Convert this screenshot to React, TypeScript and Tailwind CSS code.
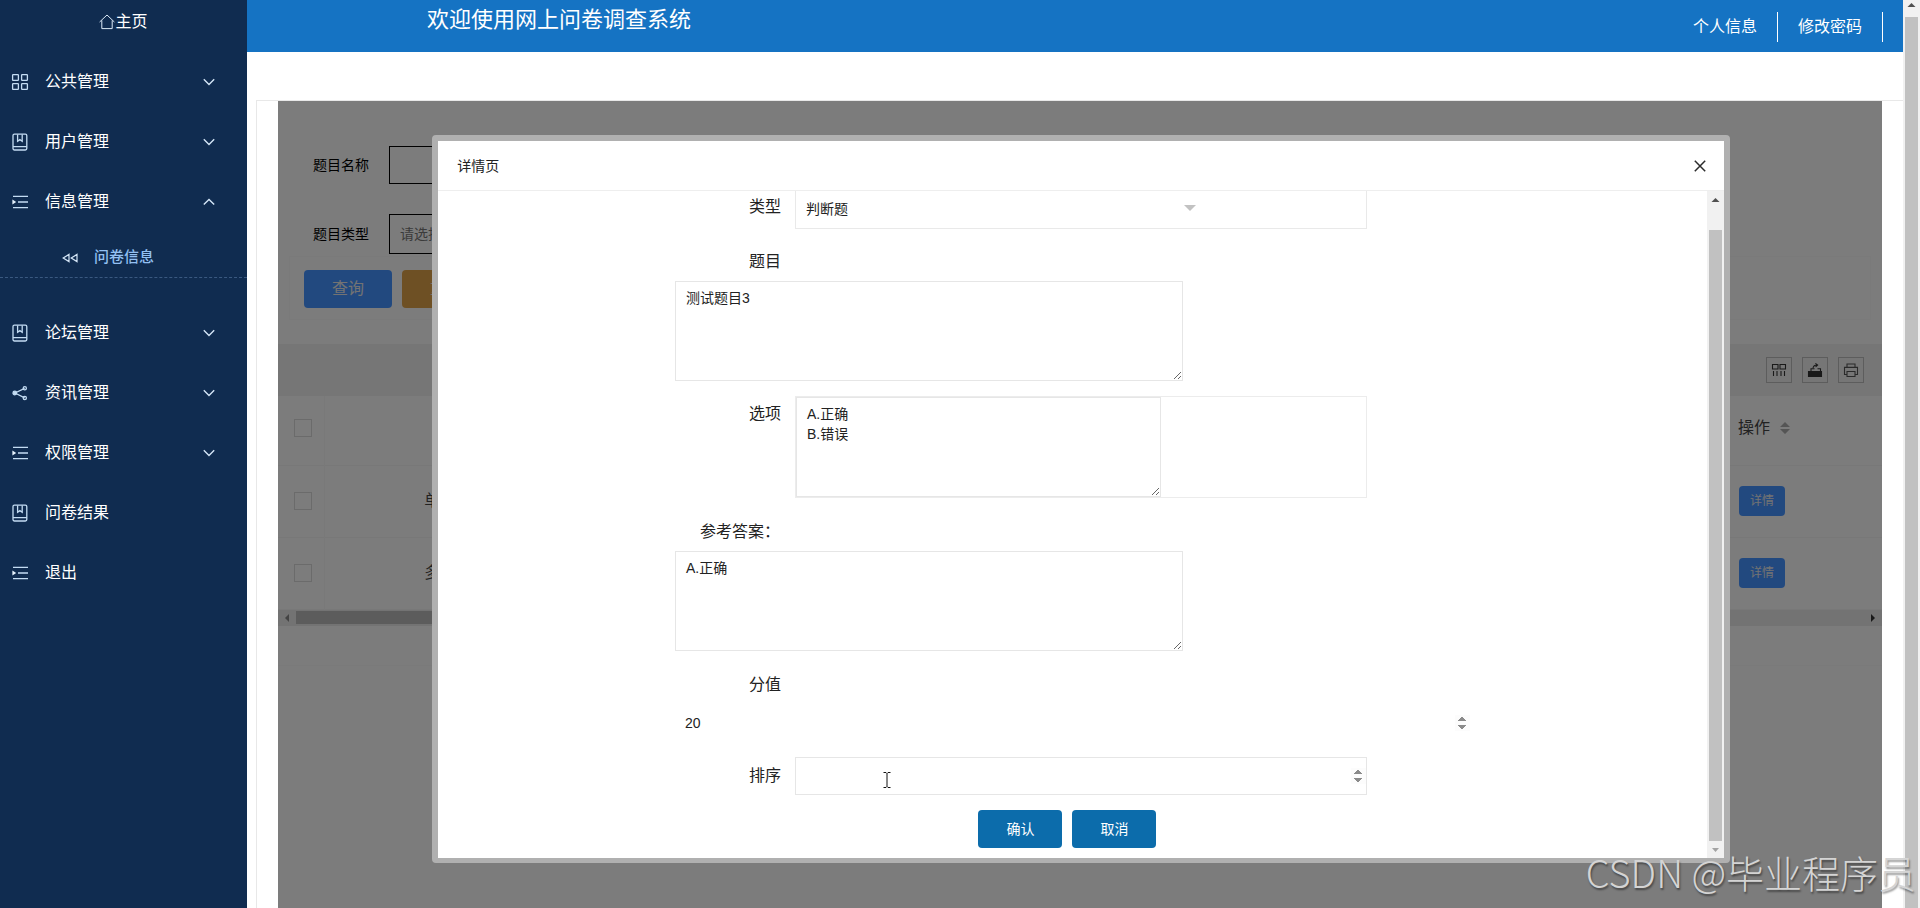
import React, { useState } from 'react';

type IconName = 'grid' | 'book' | 'list' | 'share';

interface MenuItem {
  label: string;
  icon: IconName;
  expandable: boolean;
  children?: string[];
}

const MENU: MenuItem[] = [
  { label: '公共管理', icon: 'grid', expandable: true },
  { label: '用户管理', icon: 'book', expandable: true },
  { label: '信息管理', icon: 'list', expandable: true, children: ['问卷信息'] },
  { label: '论坛管理', icon: 'book', expandable: true },
  { label: '资讯管理', icon: 'share', expandable: true },
  { label: '权限管理', icon: 'list', expandable: true },
  { label: '问卷结果', icon: 'book', expandable: false },
  { label: '退出', icon: 'list', expandable: false },
];

const ROWS = ['单选题', '多选题'];

const MenuIcon: React.FC<{ name: IconName }> = ({ name }) => (
  <svg viewBox="0 0 18 18" className="w-[18px] h-[18px] shrink-0" fill="none" stroke="#c3dcf3" strokeWidth="1.3">
    {name === 'grid' && (
      <>
        <rect x="1.6" y="1.6" width="5.8" height="5.8" rx="0.6" />
        <rect x="10.6" y="1.6" width="5.8" height="5.8" rx="0.6" />
        <rect x="1.6" y="10.6" width="5.8" height="5.8" rx="0.6" />
        <rect x="10.6" y="10.6" width="5.8" height="5.8" rx="0.6" />
      </>
    )}
    {name === 'book' && (
      <>
        <rect x="2" y="1.2" width="13.8" height="15.8" rx="1.4" />
        <path d="M2 13.6h13.8M6.6 1.4v6.8l2.3-1.6 2.3 1.6V1.4" />
      </>
    )}
    {name === 'list' && (
      <>
        <path d="M2 3.4h15M7 9h10M2 14.6h15" />
        <path d="M1.4 6.6L5.2 9l-3.8 2.4z" fill="#e6f2fd" stroke="none" />
      </>
    )}
    {name === 'share' && (
      <>
        <path d="M4 9l9.6-4.6M4 9l9.6 4.8" />
        <circle cx="3.8" cy="9" r="1.8" fill="#c3dcf3" />
        <circle cx="13.8" cy="4.2" r="1.6" />
        <circle cx="13.8" cy="14" r="1.6" />
      </>
    )}
  </svg>
);

const Chevron: React.FC<{ open: boolean }> = ({ open }) => (
  <svg viewBox="0 0 12 12" className="w-3 h-3" fill="none" stroke="#d4e6f7" strokeWidth="1.4">
    <path d={open ? 'M0.8 8.6L6 3.4l5.2 5.2' : 'M0.8 3.2L6 8.4l5.2-5.2'} />
  </svg>
);

const Sidebar: React.FC = () => (
  <nav className="w-[247px] shrink-0 bg-[#102c50] text-white">
    <a href="#home" className="flex h-[52px] items-center justify-center pb-2 text-base">
      <svg viewBox="0 0 16 16" className="w-4 h-4" fill="none" stroke="#dceaf7" strokeWidth="1">
        <path d="M0.6 8L8 1l7.4 7M2.8 6.4v8.2h10.4V6.4" />
      </svg>
      主页
    </a>
    <ul>
      {MENU.map(item => (
        <li key={item.label}>
          <a href="#menu" className="flex h-[60px] items-center pl-[11px] pr-8 text-base">
            <MenuIcon name={item.icon} />
            <span className="ml-4 flex-1">{item.label}</span>
            {item.expandable && <Chevron open={!!item.children} />}
          </a>
          {item.children && (
            <ul className="mb-[25px]">
              {item.children.map(child => (
                <li key={child} className="border-b border-dashed border-[#3a5980]">
                  <a href="#survey" className="flex h-[45px] items-center gap-4 pl-[62px] pt-1.5 text-[15px] font-medium text-[#93c0f2]">
                    <svg viewBox="0 0 16 10" className="w-4 h-2.5" fill="none" stroke="#d4e6f7" strokeWidth="1.2">
                      <path d="M7 1.4v7.2L1.2 5zM15 1.4v7.2L9.2 5z" />
                    </svg>
                    {child}
                  </a>
                </li>
              ))}
            </ul>
          )}
        </li>
      ))}
    </ul>
  </nav>
);

const Header: React.FC = () => (
  <header className="flex h-[52px] justify-between bg-[#1573c3] pl-[180px] pr-5 text-white">
    <h1 className="text-[22px] leading-10">欢迎使用网上问卷调查系统</h1>
    <div className="flex items-center pt-0.5 text-base">
      <a href="#profile" className="flex h-[30px] items-center border-r border-white px-5">个人信息</a>
      <a href="#password" className="flex h-[30px] items-center border-r border-white px-5">修改密码</a>
    </div>
  </header>
);

const SearchForm: React.FC = () => (
  <form className="pt-[45px]">
    <div className="flex items-center pl-[35px] text-sm">
      <label htmlFor="q-name" className="w-[76px]">题目名称</label>
      <input id="q-name" className="h-[38px] w-[190px] border border-black px-2.5" />
    </div>
    <div className="mt-[30px] flex items-center pl-[35px] text-sm">
      <label htmlFor="q-type" className="w-[76px]">题目类型</label>
      <select id="q-type" className="h-10 w-[190px] appearance-none border border-black px-2.5 text-[#777]">
        <option>请选择</option>
      </select>
    </div>
    <div className="mx-[11px] mt-0.5 flex gap-2.5 border border-[#f5f5f5] px-3.5 pb-[11px] pt-[13px] text-base text-[#e6e6e6]">
      <button type="button" className="h-[38px] w-[88px] rounded-sm bg-[#4492ff]">查询</button>
      <button type="button" className="h-[38px] w-[88px] rounded-sm bg-[#dca048]">重置</button>
    </div>
  </form>
);

const ToolButton: React.FC<{ label: string; children: React.ReactNode }> = ({ label, children }) => (
  <button type="button" aria-label={label} className="flex w-[26px] h-[26px] items-center justify-center border border-[#bbb]">
    <svg viewBox="0 0 16 16" className="w-4 h-4" fill="none" stroke="#333" strokeWidth="1.1">{children}</svg>
  </button>
);

const ResultTable: React.FC = () => (
  <section className="mt-6">
    <div className="flex h-[52px] items-center justify-end gap-2.5 bg-[#ececec] pr-[18px]">
      <ToolButton label="筛选列">
        <path d="M1.5 2.5h5.5v4.5h-5.5zM9 2.5h5.5v4.5h-5.5zM2.5 9v5M6 9v5M10 9v5M13.5 9v5" />
      </ToolButton>
      <ToolButton label="导出">
        <path d="M1.5 9.5h13v5h-13z" fill="#333" />
        <path d="M4 9V6.8h3.5M10.5 6.8h3V9M6 6c.4-2 1.6-3 4-3M8.4 1.4L10.6 3 8.6 4.8" />
      </ToolButton>
      <ToolButton label="打印">
        <path d="M4 5V2h8v3M4 12.5H1.5V5.4h13v7.1H12M4 9.5h8V14.5H4z" stroke="#555" />
      </ToolButton>
    </div>
    <table className="w-full table-fixed border-collapse text-base text-[#444]">
      <thead>
        <tr className="h-[69px] border-b border-[#f0f0f0]">
          <th className="w-[46px] border-r border-[#f3f3f3] pb-1">
            <input type="checkbox" aria-label="全选" className="block w-[18px] h-[18px] ml-4 appearance-none border border-[#d6d6d6]" />
          </th>
          <th className="w-[248px] pb-1 font-normal">类型</th>
          <th />
          <th className="w-[144px] pb-1 text-left font-normal">
            <span className="flex items-center gap-2.5">
              操作
              <svg viewBox="0 0 10 12" className="w-2.5 h-3" fill="#aaa">
                <path d="M5 0l5 5H0zM5 12l5-5H0z" />
              </svg>
            </span>
          </th>
        </tr>
      </thead>
      <tbody>
        {ROWS.map(type => (
          <tr key={type} className="h-[72px] border-b border-[#f0f0f0]">
            <td className="border-r border-[#f3f3f3]">
              <input type="checkbox" aria-label={type} className="block w-[18px] h-[18px] ml-4 appearance-none border border-[#d6d6d6]" />
            </td>
            <td className="text-center">{type}</td>
            <td />
            <td>
              <button type="button" className="ml-px block h-[30px] w-[46px] rounded-sm bg-[#4492ff] text-xs text-[#e6e6e6]">详情</button>
            </td>
          </tr>
        ))}
      </tbody>
    </table>
    <div className="flex h-4 items-center bg-[#e6e6e6] px-1.5">
      <svg viewBox="0 0 6 8" className="w-1.5 h-2 mr-1.5" fill="#888"><path d="M5 0v8L1 4z" /></svg>
      <div className="h-[13px] w-[900px] bg-[#b8b8b8]" />
      <svg viewBox="0 0 6 8" className="w-1.5 h-2 ml-auto" fill="#333"><path d="M1 0v8l4-4z" /></svg>
    </div>
    <div className="h-10 border-b border-[#f4f4f4]" />
  </section>
);

const VerticalScrollbar: React.FC<{ className: string; thumb: string; last?: boolean }> = ({ className, thumb, last }) => (
  <div className={`flex shrink-0 flex-col items-center bg-[#f1f1f1] ${className}`}>
    <svg viewBox="0 0 17 17" className="w-[17px] h-[17px] shrink-0" fill="#505050"><path d="M8.5 3l4 4h-8z" /></svg>
    <div className={`w-[13px] flex-1 bg-[#c1c1c1] ${thumb}`} />
    {last && <svg viewBox="0 0 17 17" className="w-[17px] h-[17px] shrink-0" fill="#a3a3a3"><path d="M8.5 11l3.5-4H5z" /></svg>}
  </div>
);

const spinner = '[&::-webkit-inner-spin-button]:opacity-100';
const labelClass = 'w-[120px] shrink-0 pr-[14px] text-right text-base leading-5';
const areaClass = 'block h-[100px] border border-[#e6e6e6] px-2.5 py-1.5 text-sm leading-5 resize';

const DetailModal: React.FC = () => {
  const [question, setQuestion] = useState('测试题目3');
  const [options, setOptions] = useState('A.正确\nB.错误');
  const [answer, setAnswer] = useState('A.正确');
  const [score, setScore] = useState('20');
  const [order, setOrder] = useState('');

  return (
    <div role="dialog" aria-label="详情页" className="w-[81%] self-start rounded-sm border-[6px] border-b-[5px] border-[#b0b0b0] bg-white text-[#222]">
      <div className="flex h-[50px] items-center justify-between border-b border-[#eee] pl-[19px] pr-[18px] text-sm">
        <h2>详情页</h2>
        <button type="button" aria-label="关闭">
          <svg viewBox="0 0 12 12" className="w-3 h-3" fill="none" stroke="#2b2b2b" strokeWidth="1.5">
            <path d="M0.8 0.8l10.4 10.4M11.2 0.8L0.8 11.2" />
          </svg>
        </button>
      </div>
      <div className="flex">
        <form className="mx-auto w-[795px] pb-2.5">
          <div className="flex">
            <label htmlFor="f-type" className={`${labelClass} pt-1.5`}>类型</label>
            <div className="relative h-[38px] w-[572px] border border-t-0 border-[#e9e9e9]">
              <select id="f-type" className="h-9 w-[412px] appearance-none px-2.5 text-sm">
                <option>判断题</option>
              </select>
              <svg viewBox="0 0 12 6" className="pointer-events-none absolute left-[388px] top-3.5 w-3 h-1.5" fill="#c2c2c2">
                <path d="M0 0h12L6 6z" />
              </svg>
            </div>
          </div>

          <div className="mt-[23px]">
            <label htmlFor="f-question" className={`${labelClass} block`}>题目</label>
            <textarea id="f-question" value={question} onChange={e => setQuestion(e.target.value)} className={`${areaClass} mt-[9px] w-[508px]`} />
          </div>

          <div className="mt-[15px] flex">
            <label htmlFor="f-options" className={`${labelClass} pt-2`}>选项</label>
            <div className="w-[572px] border border-[#ececec]">
              <textarea id="f-options" value={options} onChange={e => setOptions(e.target.value)} className={`${areaClass} w-[365px]`} />
            </div>
          </div>

          <div className="mt-6">
            <label htmlFor="f-answer" className="block pl-[25px] text-base leading-5">参考答案：</label>
            <textarea id="f-answer" value={answer} onChange={e => setAnswer(e.target.value)} className={`${areaClass} mt-[9px] w-[508px]`} />
          </div>

          <div className="mt-6">
            <label htmlFor="f-score" className={`${labelClass} block`}>分值</label>
            <input id="f-score" type="number" value={score} onChange={e => setScore(e.target.value)} className={`mt-[9px] block h-[38px] w-full pl-2.5 text-sm ${spinner}`} />
          </div>

          <div className="mt-[15px] flex items-center">
            <label htmlFor="f-order" className={labelClass}>排序</label>
            <div className="relative w-[572px]">
              <input id="f-order" type="number" value={order} onChange={e => setOrder(e.target.value)} className={`block h-[38px] w-full border border-[#e6e6e6] pl-2.5 text-sm ${spinner}`} />
              <svg viewBox="0 0 8 16" className="pointer-events-none absolute left-[88px] top-[15px] w-2 h-4" fill="none" stroke="#111">
                <path d="M0.5 0.5h2.5l1 1 1-1h2.5M4 1.5v13M0.5 15.5h2.5l1-1 1 1h2.5" />
              </svg>
            </div>
          </div>

          <div className="mt-[15px] flex justify-center gap-2.5 pr-2.5 text-sm text-white">
            <button type="button" className="h-[38px] w-[84px] rounded-sm bg-[#0c6cab]">确认</button>
            <button type="button" className="h-[38px] w-[84px] rounded-sm bg-[#0c6cab]">取消</button>
          </div>
        </form>
        <VerticalScrollbar className="w-[17px] pt-1" thumb="mt-[18px]" last />
      </div>
    </div>
  );
};

const App: React.FC = () => (
  <div className="relative flex h-screen overflow-hidden bg-white font-['Liberation_Sans','Noto_Sans_CJK_SC',sans-serif]">
    <Sidebar />
    <div className="flex min-w-0 flex-1 flex-col">
      <Header />
      <main className="ml-[9px] mt-12 flex flex-1 border-l border-t border-[#e8e8e8] px-[21px]">
        <div className="relative flex-1 bg-[#f9f9f9]">
          <SearchForm />
          <ResultTable />
          <div className="absolute inset-0 flex justify-center bg-black/50 pl-0.5 pt-[34px]">
            <DetailModal />
          </div>
        </div>
      </main>
    </div>
    <VerticalScrollbar className="w-[17px]" thumb="" />
    <div className="pointer-events-none absolute bottom-2 right-1 font-['Noto_Sans_CJK_SC',sans-serif] text-[38px] font-light leading-[56px] text-[#d4d4d4] [text-shadow:1px_2px_2px_rgba(0,0,0,0.45)]">
      CSDN @毕业程序员
    </div>
  </div>
);

export default App;
